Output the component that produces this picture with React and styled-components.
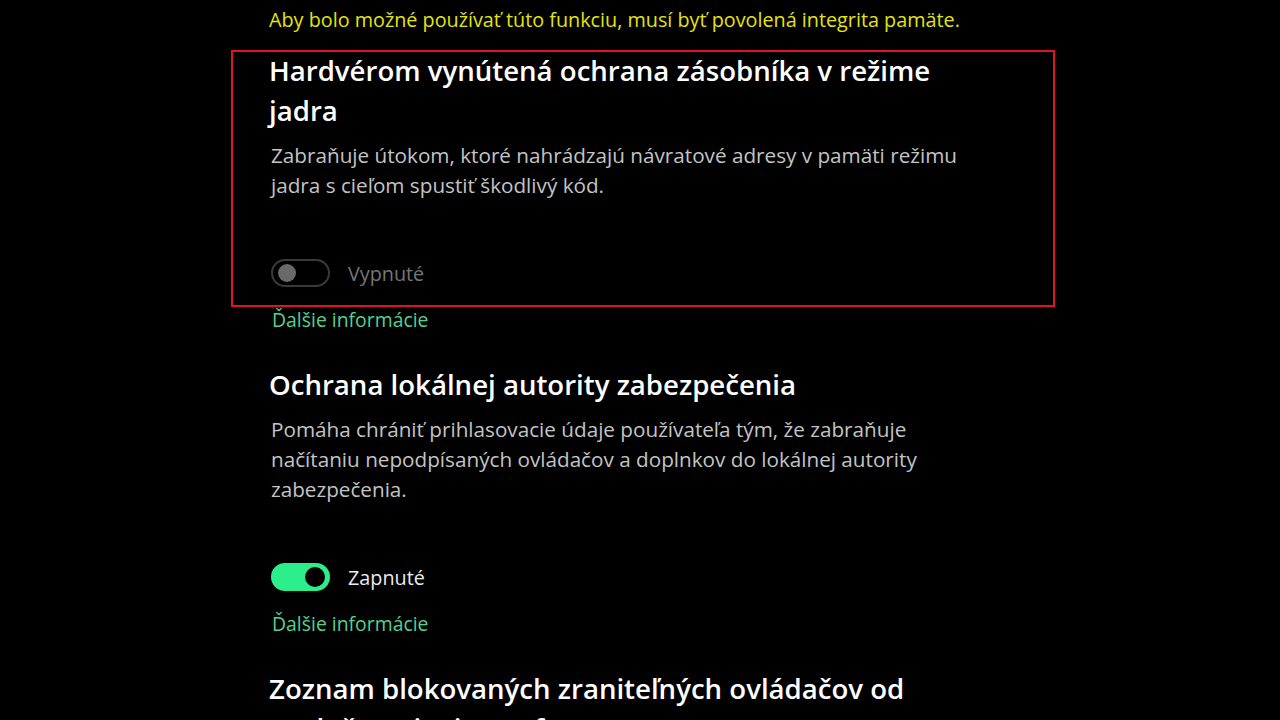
import styled, { createGlobalStyle } from "styled-components";

const GlobalStyle = createGlobalStyle`
  html, body {
    margin: 0;
    background: #000;
  }
  body {
    font-family: "Segoe UI", "Open Sans", "Noto Sans", sans-serif;
    color: #fff;
    overflow: hidden;
  }
`;

const Page = styled.div`
  height: 720px;
  overflow: hidden;
  padding-left: 231px;
  padding-top: 5px;
  box-sizing: border-box;
`;

const Column = styled.div`
  width: 824px;
`;

const Note = styled.div`
  padding-left: 38px;
  font-size: 19.8px;
  line-height: 30px;
  color: #e4e40e;
  margin-bottom: 15px;
  white-space: nowrap;
`;

// the highlighted one gets the red frame, the others a transparent one so text lines up
const Section = styled.section`
  border: 2px solid ${(p) => (p.$marked ? "#e0141c" : "transparent")};
  padding: 0 36px 18px;
  margin-top: ${(p) => (p.$first ? "0" : "31px")};
`;

const Title = styled.h2`
  margin: -2px 0 0;
  font-size: 27.6px;
  font-weight: 600;
  line-height: 40px;
  color: #fff;
  white-space: nowrap;
`;

const Desc = styled.p`
  margin: 10px 0 0 2px;
  font-size: 20.7px;
  line-height: 30px;
  color: #c4c4c4;
  white-space: nowrap;
`;

const ToggleRow = styled.div`
  display: flex;
  align-items: center;
  gap: 18px;
  margin: 59px 0 0 2px;
  height: 28px;
`;

const Track = styled.div`
  position: relative;
  width: 59px;
  height: 28px;
  box-sizing: border-box;
  border-radius: 14px;
  border: 2px solid ${(p) => (p.$on ? "#2bef8b" : "#3a3a3a")};
  background: ${(p) => (p.$on ? "#2bef8b" : "transparent")};
`;

const Knob = styled.span`
  position: absolute;
  top: 50%;
  width: ${(p) => (p.$on ? "20px" : "18px")};
  height: ${(p) => (p.$on ? "20px" : "18px")};
  border-radius: 50%;
  transform: translateY(-50%);
  background: ${(p) => (p.$on ? "#000" : "#696969")};
  ${(p) => (p.$on ? "right: 3px;" : "left: 5px;")}
`;

const State = styled.span`
  font-size: 19.8px;
  color: ${(p) => (p.$on ? "#ececec" : "#767676")};
`;

const MoreLink = styled.a`
  display: block;
  padding-left: 41px;
  font-size: 19.4px;
  line-height: 26px;
  color: #52d291;
  text-decoration: none;
`;

const Toggle = ({ on }) => (
  <ToggleRow>
    <Track $on={on}>
      <Knob $on={on} />
    </Track>
    <State $on={on}>{on ? "Zapnuté" : "Vypnuté"}</State>
  </ToggleRow>
);

export default function App() {
  return (
    <>
      <GlobalStyle />
      <Page>
        <Column>
          <Note>Aby bolo možné používať túto funkciu, musí byť povolená integrita pamäte.</Note>

          <Section $marked $first>
            <Title>
              Hardvérom vynútená ochrana zásobníka v režime
              <br />
              jadra
            </Title>
            <Desc>
              Zabraňuje útokom, ktoré nahrádzajú návratové adresy v pamäti režimu
              <br />
              jadra s cieľom spustiť škodlivý kód.
            </Desc>
            <Toggle on={false} />
          </Section>
          <MoreLink href="#">Ďalšie informácie</MoreLink>

          <Section>
            <Title>Ochrana lokálnej autority zabezpečenia</Title>
            <Desc>
              Pomáha chrániť prihlasovacie údaje používateľa tým, že zabraňuje
              <br />
              načítaniu nepodpísaných ovládačov a doplnkov do lokálnej autority
              <br />
              zabezpečenia.
            </Desc>
            <Toggle on />
          </Section>
          <MoreLink href="#">Ďalšie informácie</MoreLink>

          <Section>
            <Title>
              Zoznam blokovaných zraniteľných ovládačov od
              <br />
              spoločnosti Microsoft
            </Title>
          </Section>
        </Column>
      </Page>
    </>
  );
}
